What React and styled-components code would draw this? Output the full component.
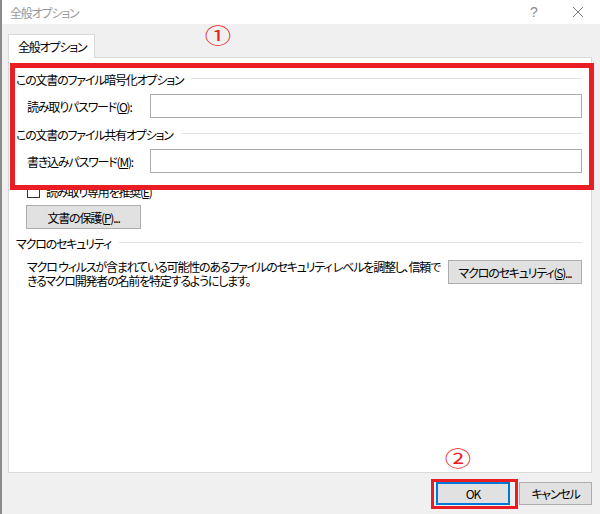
import React from "react";
import styled, { createGlobalStyle } from "styled-components";

const GlobalStyle = createGlobalStyle`
  html, body { margin: 0; padding: 0; background: #f0f0f0; }
  body {
    font-family: "Noto Sans CJK JP", "Noto Sans", sans-serif;
    font-size: 12px;
    font-feature-settings: "palt";
    letter-spacing: -1.2px;
    color: #1a1a1a;
  }
`;

const Window = styled.div`
  position: relative;
  width: 600px;
  height: 514px;
  box-sizing: border-box;
  border-left: 2px solid #8a8a8a;
  background: #f0f0f0;
  display: flex;
  flex-direction: column;
  overflow: hidden;
`;

const TitleBar = styled.div`
  height: 24px;
  background: #ffffff;
  display: flex;
  align-items: center;
  padding: 0 0 0 8px;
  flex-shrink: 0;
`;

const Title = styled.div`
  flex: 1;
  color: #9a9a9a;
  font-size: 12px;
`;

const TitleButton = styled.div`
  width: 44px;
  height: 24px;
  display: flex;
  align-items: center;
  justify-content: center;
  color: #8a8a8a;
  font-family: "Liberation Sans", sans-serif;
  font-size: 14px;
  letter-spacing: 0;
`;

const Body = styled.div`
  flex: 1;
  padding: 9px 8px 0 6px;
  display: flex;
  flex-direction: column;
`;

const TabStrip = styled.div`
  height: 24px;
  display: flex;
  align-items: flex-end;
  position: relative;
  z-index: 1;
`;

const Tab = styled.div`
  height: 24px;
  box-sizing: border-box;
  padding: 0 8px 0 9px;
  background: #ffffff;
  border: 1px solid #d9d9d9;
  border-bottom: none;
  display: flex;
  align-items: center;
  color: #000;
  margin-bottom: -1px;
`;

const Panel = styled.div`
  height: 416px;
  box-sizing: border-box;
  background: #ffffff;
  border: 1px solid #d9d9d9;
  padding: 14px 9px 0 7px;
  display: flex;
  flex-direction: column;
`;

const Highlighted = styled.div`
  position: relative;
  display: flex;
  flex-direction: column;
`;

const AnnotationBox = styled.div`
  position: absolute;
  left: ${(p) => p.$l}px;
  top: ${(p) => p.$t}px;
  width: ${(p) => p.$w}px;
  height: ${(p) => p.$h}px;
  box-sizing: border-box;
  border: ${(p) => p.$b}px solid #ea1c24;
  pointer-events: none;
  z-index: 5;
`;

const Marker = styled.div`
  position: absolute;
  left: ${(p) => p.$x}px;
  top: ${(p) => p.$y}px;
  transform: translate(-50%, -50%) scale(1.2, 0.95);
  color: #ea1c24;
  font-size: 22px;
  line-height: 1;
  letter-spacing: 0;
  z-index: 6;
`;

const GroupHeading = styled.div`
  display: flex;
  align-items: center;
  height: 14px;
  color: #000;
  margin-top: ${(p) => p.$mt || 0}px;
  &::after {
    content: "";
    flex: 1;
    height: 1px;
    background: #e3e3e3;
    margin-left: 8px;
    margin-top: -1px;
  }
`;

const FieldRow = styled.div`
  display: flex;
  align-items: center;
  padding-left: 11px;
  margin-top: ${(p) => p.$mt}px;
`;

const Label = styled.div`
  width: 123px;
  flex-shrink: 0;
  color: #000;
`;

const Input = styled.div`
  flex: 1;
  height: 24px;
  box-sizing: border-box;
  border: 1px solid #ababab;
  background: #fff;
`;

const CheckRow = styled.div`
  display: flex;
  align-items: center;
  gap: 6px;
  padding-left: 11px;
  margin-top: 11px;
  height: 14px;
  color: #000;
`;

const CheckBox = styled.span`
  width: 13px;
  height: 13px;
  box-sizing: border-box;
  border: 1px solid #333;
  background: #fff;
`;

const Button = styled.div`
  height: ${(p) => p.$h || 24}px;
  width: ${(p) => p.$w}px;
  box-sizing: border-box;
  background: #e1e1e1;
  border: ${(p) => (p.$focused ? "2px solid #0078d7" : "1px solid #adadad")};
  display: flex;
  align-items: center;
  justify-content: center;
  color: #000;
  flex-shrink: 0;
  white-space: nowrap;
`;

const ProtectWrap = styled.div`
  padding-left: 10px;
  margin-top: 7px;
`;

const MacroRow = styled.div`
  display: flex;
  align-items: flex-start;
  justify-content: space-between;
  padding-left: 11px;
  margin-top: 10px;
`;

const Description = styled.div`
  width: 412px;
  flex-shrink: 0;
  display: flex;
  flex-direction: column;
  color: #000;
  white-space: nowrap;
`;

const DescLine = styled.div`
  height: 14px;
  line-height: 14px;
  overflow: visible;
`;

const Footer = styled.div`
  display: flex;
  justify-content: flex-end;
  gap: 9px;
  padding: 9px 0 0 0;
`;

const U = styled.span`
  text-decoration: underline;
`;

export default function App() {
  return (
    <>
      <GlobalStyle />
      <Window>
        <TitleBar>
          <Title>全般オプション</Title>
          <TitleButton>?</TitleButton>
          <TitleButton>
            <svg width="12" height="12" viewBox="0 0 12 12">
              <path d="M1 1L11 11M11 1L1 11" stroke="#777" strokeWidth="1" fill="none" />
            </svg>
          </TitleButton>
        </TitleBar>
        <Marker $x={216} $y={33}>①</Marker>
        <Marker $x={456} $y={457}>②</Marker>
        <AnnotationBox $l={429} $t={479} $w={87} $h={30} $b={3} />
        <Body>
          <TabStrip>
            <Tab>全般オプション</Tab>
          </TabStrip>
          <Panel>
            <Highlighted>
              <AnnotationBox $l={-6} $t={-9} $w={584} $h={127} $b={5} />
              <GroupHeading>この文書のファイル暗号化オプション</GroupHeading>
              <FieldRow $mt={8}>
                <Label>
                  読み取りパスワード(<U>O</U>):
                </Label>
                <Input />
              </FieldRow>
              <GroupHeading $mt={9}>この文書のファイル共有オプション</GroupHeading>
              <FieldRow $mt={8}>
                <Label>
                  書き込みパスワード(<U>M</U>):
                </Label>
                <Input />
              </FieldRow>
            </Highlighted>
            <CheckRow>
              <CheckBox />
              <span>
                読み取り専用を推奨(<U>E</U>)
              </span>
            </CheckRow>
            <ProtectWrap>
              <Button $w={115}>
                文書の保護(<U>P</U>)...
              </Button>
            </ProtectWrap>
            <GroupHeading $mt={7}>マクロのセキュリティ</GroupHeading>
            <MacroRow>
              <Description>
                <DescLine>
                  マクロ ウィルスが含まれている可能性のあるファイルのセキュリティ レベルを調整し、信頼で
                </DescLine>
                <DescLine>きるマクロ開発者の名前を特定するようにします。</DescLine>
              </Description>
              <Button $w={134}>
                マクロのセキュリティ(<U>S</U>)...
              </Button>
            </MacroRow>
          </Panel>
          <Footer>
            <Button $w={74} $h={23} $focused>
              OK
            </Button>
            <Button $w={73} $h={23}>
              キャンセル
            </Button>
          </Footer>
        </Body>
      </Window>
    </>
  );
}
